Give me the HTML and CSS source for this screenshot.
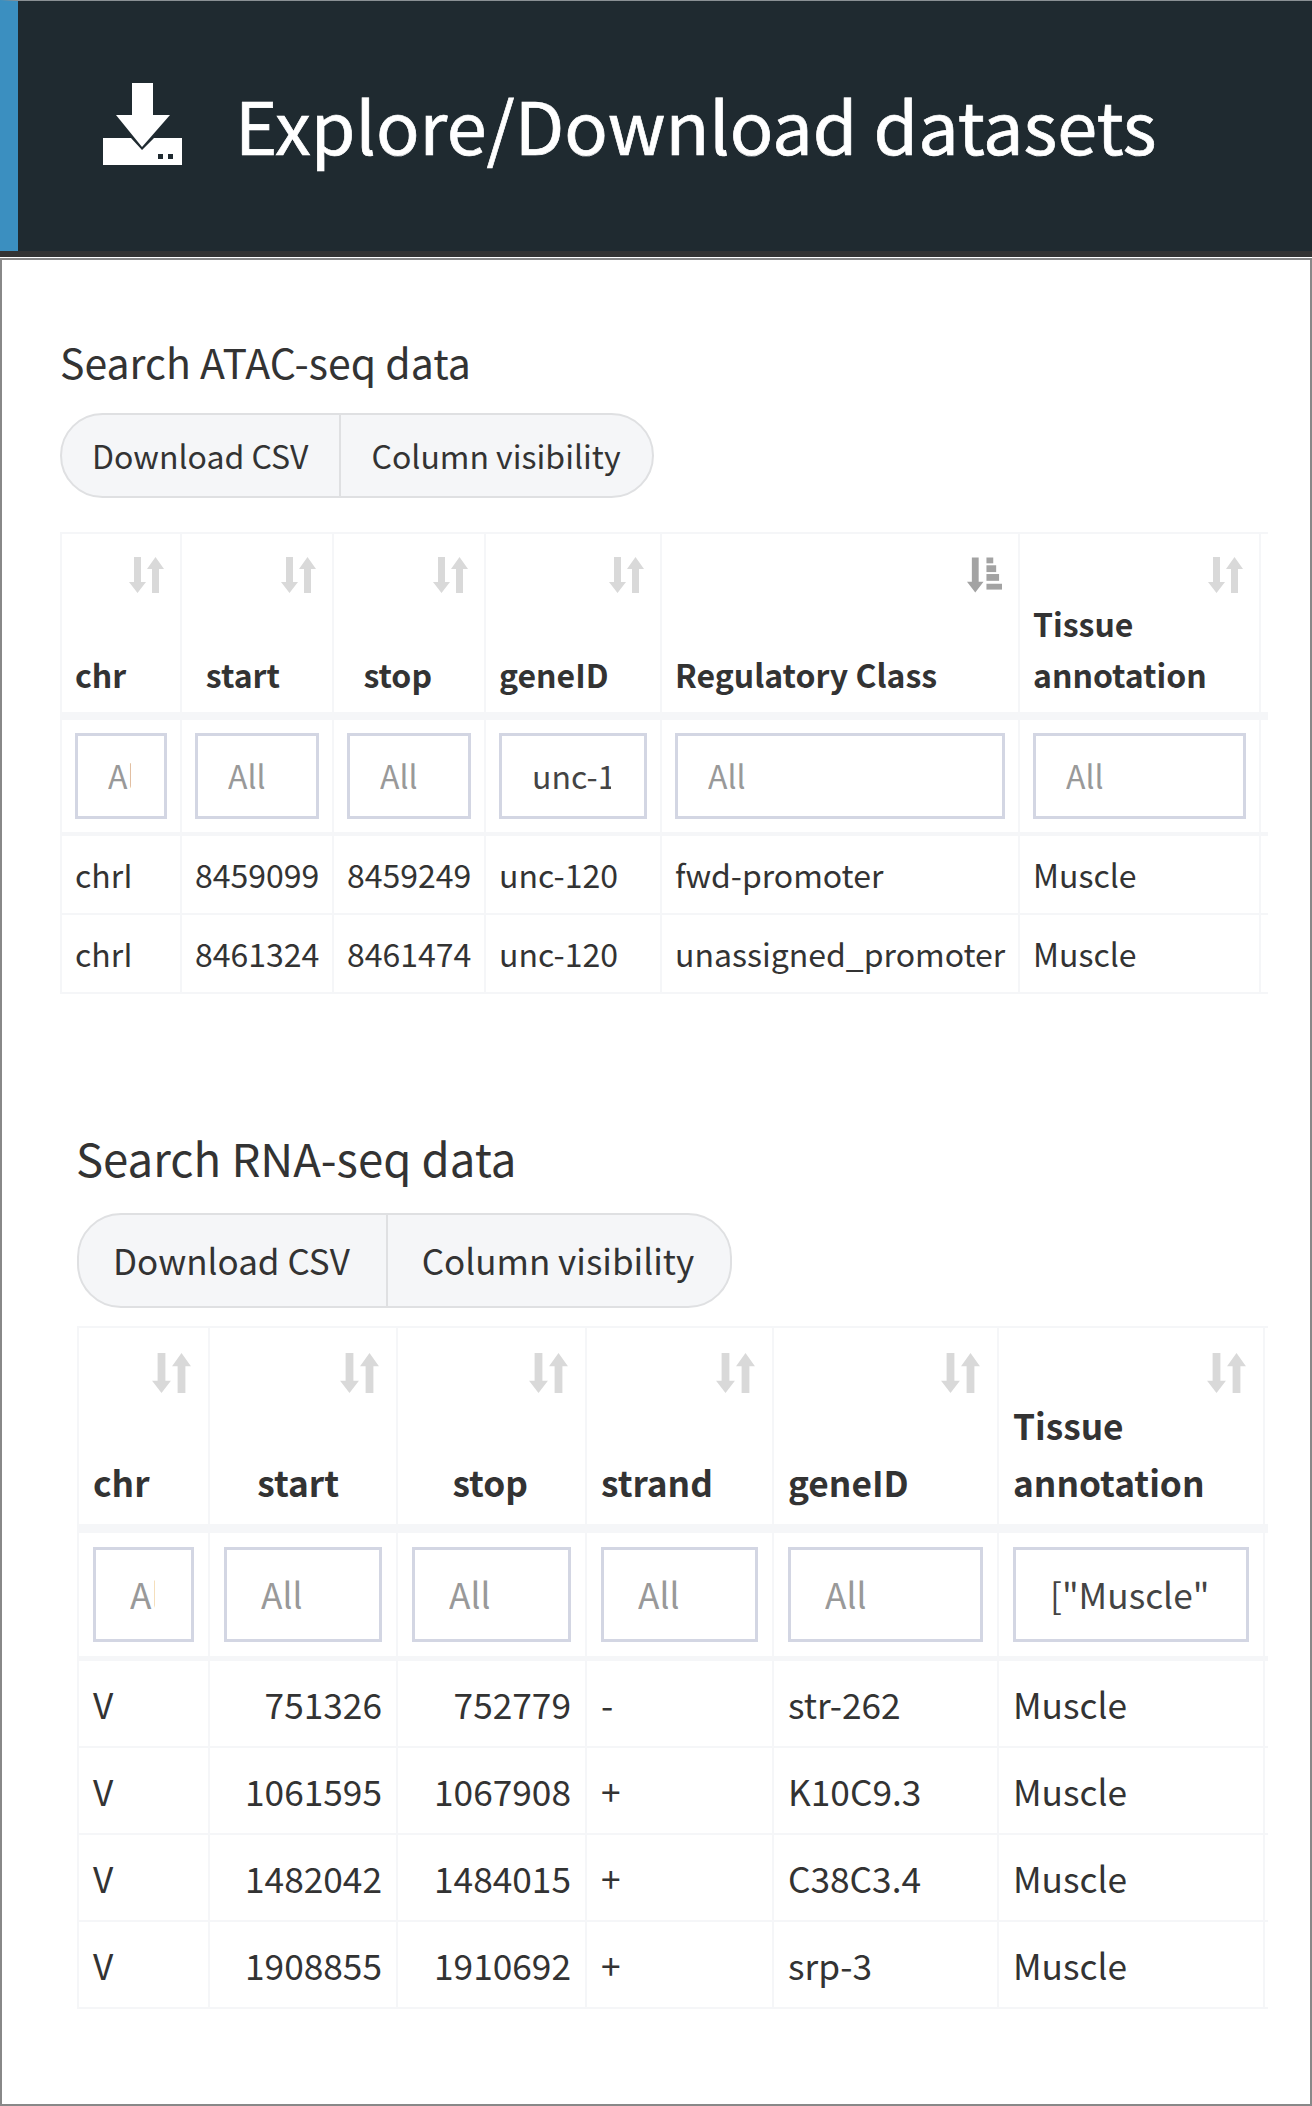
FILE: index.html
```html
<!DOCTYPE html>
<html lang="en">
<head>
    <meta charset="UTF-8">
    <meta name="viewport" content="width=device-width, initial-scale=1.0">
    <title>Explore/Download datasets</title>
    <link rel="stylesheet" href="styles.css">
</head>
<body>
    <svg class="icon-defs" width="0" height="0">
        <symbol id="sort-both" viewBox="0 0 35 36">
            <polygon points="5,0 12,0 12,25 17,25 8.5,36 0,25 5,25"/>
            <polygon points="26.5,0 35,12 30,12 30,36 23,36 23,12 18,12"/>
        </symbol>
        <symbol id="sort-asc" viewBox="0 0 36 36">
            <polygon points="5,0 12,0 12,25 17,25 8.5,36 0,25 5,25"/>
            <rect x="20" y="0" width="7" height="6"/>
            <rect x="20" y="8" width="10" height="7"/>
            <rect x="20" y="17" width="13" height="7"/>
            <rect x="20" y="27" width="16" height="6"/>
        </symbol>
    </svg>

    <header class="page-header">
        <svg class="header-icon" viewBox="0 0 79 82">
            <path fill="#fff" d="M0 55 H28 L39 67 L51 55 H79 V82 H0 Z"/>
            <polygon fill="#fff" points="29,0 50,0 50,32 67,32 39,64 13,32 29,32"/>
            <rect fill="#1f2a30" x="55" y="71" width="5" height="5"/>
            <rect fill="#1f2a30" x="65" y="71" width="5" height="5"/>
        </svg>
        <h1>Explore/Download datasets</h1>
    </header>

    <main class="content">
        <section class="search search-atac">
            <h2>Search ATAC-seq data</h2>
            <div class="btn-group">
                <button type="button">Download CSV</button>
                <button type="button">Column visibility</button>
            </div>
            <div class="table-wrap">
                <table>
                    <colgroup>
                        <col class="c1"><col class="c2"><col class="c3"><col class="c4"><col class="c5"><col class="c6"><col class="c7">
                    </colgroup>
                    <thead>
                        <tr class="head-row">
                            <th>chr<svg class="sort"><use href="#sort-both"/></svg></th>
                            <th class="num">start<svg class="sort"><use href="#sort-both"/></svg></th>
                            <th class="num">stop<svg class="sort"><use href="#sort-both"/></svg></th>
                            <th>geneID<svg class="sort"><use href="#sort-both"/></svg></th>
                            <th>Regulatory Class<svg class="sort sort-active"><use href="#sort-asc"/></svg></th>
                            <th>Tissue annotation<svg class="sort"><use href="#sort-both"/></svg></th>
                            <th></th>
                        </tr>
                        <tr class="filter-row">
                            <td><input type="text" placeholder="All"></td>
                            <td><input type="text" placeholder="All"></td>
                            <td><input type="text" placeholder="All"></td>
                            <td><input type="text" value="unc-1"></td>
                            <td><input type="text" placeholder="All"></td>
                            <td><input type="text" placeholder="All"></td>
                            <td></td>
                        </tr>
                    </thead>
                    <tbody>
                        <tr>
                            <td>chrI</td><td class="num">8459099</td><td class="num">8459249</td><td>unc-120</td><td>fwd-promoter</td><td>Muscle</td><td></td>
                        </tr>
                        <tr>
                            <td>chrI</td><td class="num">8461324</td><td class="num">8461474</td><td>unc-120</td><td>unassigned_promoter</td><td>Muscle</td><td></td>
                        </tr>
                    </tbody>
                </table>
            </div>
        </section>

        <section class="search search-rna">
            <h2>Search RNA-seq data</h2>
            <div class="btn-group">
                <button type="button">Download CSV</button>
                <button type="button">Column visibility</button>
            </div>
            <div class="table-wrap">
                <table>
                    <colgroup>
                        <col class="c1"><col class="c2"><col class="c3"><col class="c4"><col class="c5"><col class="c6"><col class="c7">
                    </colgroup>
                    <thead>
                        <tr class="head-row">
                            <th>chr<svg class="sort"><use href="#sort-both"/></svg></th>
                            <th class="num">start<svg class="sort"><use href="#sort-both"/></svg></th>
                            <th class="num">stop<svg class="sort"><use href="#sort-both"/></svg></th>
                            <th>strand<svg class="sort"><use href="#sort-both"/></svg></th>
                            <th>geneID<svg class="sort"><use href="#sort-both"/></svg></th>
                            <th>Tissue annotation<svg class="sort"><use href="#sort-both"/></svg></th>
                            <th></th>
                        </tr>
                        <tr class="filter-row">
                            <td><input type="text" placeholder="All"></td>
                            <td><input type="text" placeholder="All"></td>
                            <td><input type="text" placeholder="All"></td>
                            <td><input type="text" placeholder="All"></td>
                            <td><input type="text" placeholder="All"></td>
                            <td><input type="text" value="[&quot;Muscle&quot;"></td>
                            <td></td>
                        </tr>
                    </thead>
                    <tbody>
                        <tr>
                            <td>V</td><td class="num">751326</td><td class="num">752779</td><td>-</td><td>str-262</td><td>Muscle</td><td></td>
                        </tr>
                        <tr>
                            <td>V</td><td class="num">1061595</td><td class="num">1067908</td><td>+</td><td>K10C9.3</td><td>Muscle</td><td></td>
                        </tr>
                        <tr>
                            <td>V</td><td class="num">1482042</td><td class="num">1484015</td><td>+</td><td>C38C3.4</td><td>Muscle</td><td></td>
                        </tr>
                        <tr>
                            <td>V</td><td class="num">1908855</td><td class="num">1910692</td><td>+</td><td>srp-3</td><td>Muscle</td><td></td>
                        </tr>
                    </tbody>
                </table>
            </div>
        </section>
    </main>
</body>
</html>
```

FILE: styles.css
```css
* {
    box-sizing: border-box;
}

body {
    margin: 0;
    height: 2106px;
    background-color: #fff;
    color: #333;
    font-family: "Noto Sans CJK SC", "Source Sans Pro", sans-serif;
}

.icon-defs {
    display: block;
    height: 0;
}

/* dark title bar */
.page-header {
    display: flex;
    align-items: center;
    height: 251px;
    padding-left: 85px;
    padding-bottom: 4px;
    background-color: #1f2a30;
    border-top: 1px solid #8a9094;
    border-left: 18px solid #3b8fc0;
    box-shadow: 0 6px 0 #333;
}

.header-icon {
    width: 79px;
    height: 82px;
    margin-right: 53px;
    margin-top: -1px;
}

.page-header h1 {
    margin: 0;
    margin-top: -1px;
    font-size: 72px;
    font-weight: 400;
    line-height: 1;
    color: #fff;
    -webkit-text-stroke: 0.7px #fff;
}

.content {
    height: 1848px;
    margin-top: 7px;
    border: 2px solid #888;
}

.search h2 {
    margin: 0;
    font-weight: 400;
}

.btn-group {
    display: inline-flex;
    background-color: #f5f6f8;
    border: 2px solid #dfe0e2;
    border-radius: 44px;
    vertical-align: top;
}

.btn-group button {
    height: 100%;
    margin: 0;
    padding-bottom: 3px;
    background: none;
    border: none;
    color: #333;
    font-family: inherit;
}

.btn-group button + button {
    border-left: 2px solid #dfe0e2;
}

.table-wrap {
    overflow: hidden;
    border-top: 2px solid #f5f6f8;
    border-left: 2px solid #f5f6f8;
}

table {
    table-layout: fixed;
    border-collapse: separate;
    border-spacing: 0;
}

th,
td {
    position: relative;
    border-right: 2px solid #f5f6f8;
    border-bottom: 2px solid #f5f6f8;
    text-align: left;
    white-space: nowrap;
}

tbody td {
    padding-bottom: 2px;
}

th {
    vertical-align: bottom;
    font-weight: 700;
    white-space: normal;
}

td input {
    display: block;
    width: 100%;
    border: 3px solid #d3d6e3;
    border-radius: 0;
    background-color: #fff;
    color: #444;
    font-family: inherit;
    outline: none;
}

td input::placeholder {
    color: #999;
    opacity: 1;
}

.num {
    text-align: right;
}

.sort {
    position: absolute;
    fill: #d9d9d9;
}

.sort-active {
    fill: #a3a3a3;
}

/* ATAC-seq block */
.search-atac {
    margin-left: 58px;
    padding-top: 63px;
}

.search-atac h2 {
    height: 90px;
    padding-top: 10px;
    font-size: 41px;
    line-height: 56px;
}

.search-atac .btn-group {
    height: 85px;
}

.search-atac .btn-group button {
    padding-left: 30px;
    padding-right: 31px;
    font-size: 32px;
}

.search-atac .table-wrap {
    width: 1208px;
    margin-top: 34px;
}

.search-atac table {
    width: 1239px;
}

.search-atac .c1 { width: 120px; }
.search-atac .c2 { width: 152px; }
.search-atac .c3 { width: 152px; }
.search-atac .c4 { width: 176px; }
.search-atac .c5 { width: 358px; }
.search-atac .c6 { width: 241px; }
.search-atac .c7 { width: 40px; }

.search-atac th,
.search-atac td {
    padding-left: 13px;
    padding-right: 13px;
    font-size: 32px;
}

.search-atac .head-row th {
    height: 186px;
    padding-bottom: 12px;
    line-height: 51px;
    border-bottom-width: 8px;
}

.search-atac th.num {
    padding-right: 52px;
}

.search-atac .filter-row td {
    height: 116px;
    padding-top: 13px;
    padding-bottom: 13px;
    vertical-align: top;
    border-bottom-width: 4px;
}

.search-atac td input {
    height: 86px;
    padding: 0 33px 2px 30px;
    font-size: 32px;
}

.search-atac tbody td {
    height: 79px;
}

.search-atac .sort {
    top: 23px;
    right: 16px;
    width: 35px;
    height: 36px;
}

/* RNA-seq block */
.search-rna {
    margin-left: 75px;
    padding-top: 120px;
}

.search-rna h2 {
    height: 99px;
    margin-left: -1px;
    padding-top: 12px;
    font-size: 45.5px;
    line-height: 62px;
}

.search-rna .btn-group {
    height: 95px;
}

.search-rna .btn-group button {
    padding-left: 34px;
    padding-right: 36px;
    font-size: 35px;
}

.search-rna .table-wrap {
    width: 1191px;
    margin-top: 18px;
}

.search-rna table {
    width: 1226px;
}

.search-rna .c1 { width: 131px; }
.search-rna .c2 { width: 188px; }
.search-rna .c3 { width: 189px; }
.search-rna .c4 { width: 187px; }
.search-rna .c5 { width: 225px; }
.search-rna .c6 { width: 266px; }
.search-rna .c7 { width: 40px; }

.search-rna th,
.search-rna td {
    padding-left: 14px;
    padding-right: 14px;
    font-size: 35.25px;
}

.search-rna .head-row th {
    height: 205px;
    padding-bottom: 14px;
    line-height: 57px;
    border-bottom-width: 9px;
}

.search-rna th.num {
    padding-right: 57px;
}

.search-rna .filter-row td {
    height: 128px;
    padding-top: 14px;
    padding-bottom: 14px;
    vertical-align: top;
    border-bottom-width: 5px;
}

.search-rna td input {
    height: 95px;
    padding: 0 36px 2px 34px;
    font-size: 35.25px;
}

.search-rna tbody td {
    height: 87px;
}

.search-rna .sort {
    top: 25px;
    right: 17px;
    width: 39px;
    height: 40px;
}
```
